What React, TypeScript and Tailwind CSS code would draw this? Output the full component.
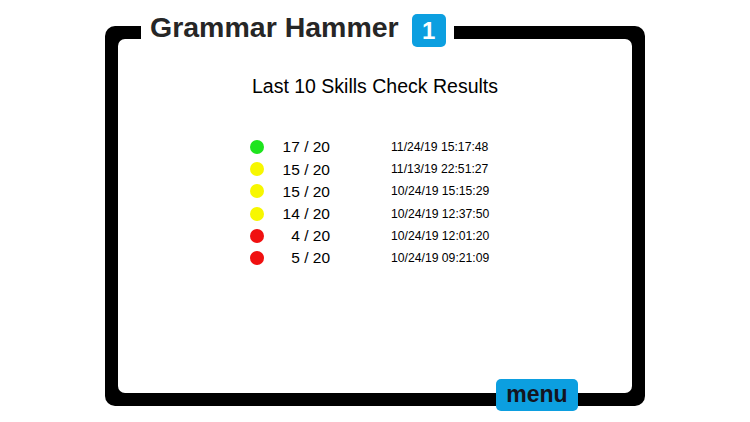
import React from "react";

const rows = [
  { color: "bg-[#1ee41e]", score: "17 / 20", date: "11/24/19 15:17:48" },
  { color: "bg-[#f7f700]", score: "15 / 20", date: "11/13/19 22:51:27" },
  { color: "bg-[#f7f700]", score: "15 / 20", date: "10/24/19 15:15:29" },
  { color: "bg-[#f7f700]", score: "14 / 20", date: "10/24/19 12:37:50" },
  { color: "bg-[#f01010]", score: "4 / 20", date: "10/24/19 12:01:20" },
  { color: "bg-[#f01010]", score: "5 / 20", date: "10/24/19 09:21:09" },
];

export default function App() {
  return (
    <div
      className="w-[750px] h-[422px] bg-white overflow-hidden pt-[26px] pl-[105px]"
      style={{ fontFamily: '"Liberation Sans", Arial, sans-serif' }}
    >
      <div className="w-[540px] h-[380px] bg-black p-[13px] rounded-[10px]">
        <div className="relative w-full h-full bg-white rounded-[7px]">
          {/* Title overlay on top border */}
          <div className="absolute left-[23px] -top-[27px] h-[38px] bg-white flex items-start pl-[9px] pr-[8px]">
            <span className="mt-[1px] text-[28.5px] leading-[28px] font-bold text-[#262626]">
              Grammar Hammer
            </span>
            <span className="ml-[13px] mt-[2px] w-[34px] h-[33px] rounded-[5px] bg-[#0c9fe0] text-white text-[24px] font-bold flex items-center justify-center leading-none">
              1
            </span>
          </div>

          {/* Content */}
          <div className="pt-[36px] flex flex-col">
            <div className="text-center text-[19.5px] leading-[22px] text-black">
              Last 10 Skills Check Results
            </div>
            <div className="mt-[39px] ml-[132px] flex flex-col">
              {rows.map((r, i) => (
                <div key={i} className="flex items-center h-[22.2px]">
                  <span className={`w-[14px] h-[14px] rounded-full ${r.color}`} />
                  <span className="w-[66px] text-right text-[15.5px] leading-none text-black">
                    {r.score}
                  </span>
                  <span className="ml-[61px] text-[12.2px] leading-none text-black">
                    {r.date}
                  </span>
                </div>
              ))}
            </div>
          </div>

          {/* Menu button overlay on bottom border */}
          <div className="absolute left-[378px] top-[340px] w-[82px] h-[32px] rounded-[5px] bg-[#0c9fe0] flex items-center justify-center">
            <span className="text-[23px] font-bold leading-none text-[#141420] -mt-[1px]">menu</span>
          </div>
        </div>
      </div>
    </div>
  );
}
